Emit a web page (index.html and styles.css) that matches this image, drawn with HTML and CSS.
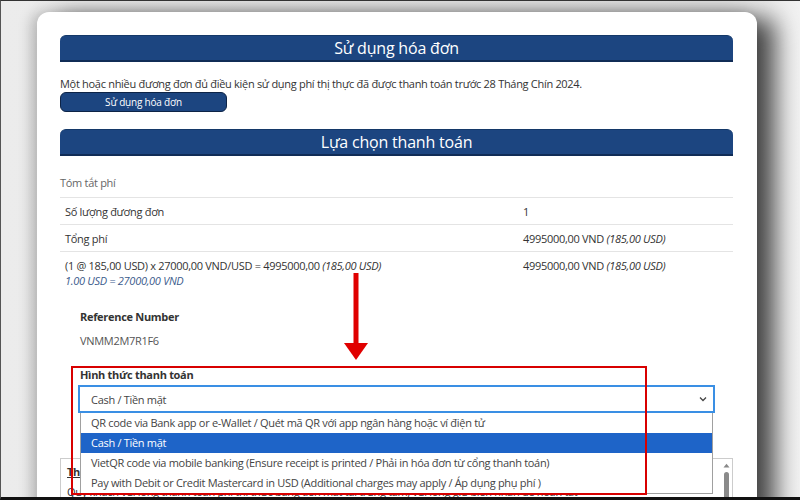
FILE: index.html
```html
<!DOCTYPE html>
<html lang="vi">
<head>
  <meta charset="UTF-8" />
  <title>Lựa chọn thanh toán</title>
  <link rel="stylesheet" href="styles.css">
</head>
<body>
  <div class="frame">
    <div class="card">
      <div class="section-title">Sử dụng hóa đơn</div>
      <p class="note">Một hoặc nhiều đương đơn đủ điều kiện sử dụng phí thị thực đã được thanh toán trước 28 Tháng Chín 2024.</p>
      <button class="use-btn">Sử dụng hóa đơn</button>

      <div class="section-title second">Lựa chọn thanh toán</div>

      <div class="summary-label">Tóm tắt phí</div>
      <table class="fee-table">
        <tr>
          <td>Số lượng đương đơn</td>
          <td class="value">1</td>
        </tr>
        <tr>
          <td>Tổng phí</td>
          <td class="value">4995000,00 VND <em>(185,00 USD)</em></td>
        </tr>
        <tr class="calc">
          <td>(1 @ 185,00 USD) x 27000,00 VND/USD = 4995000,00 <em>(185,00 USD)</em><br>
            <em class="rate">1.00 USD = 27000,00 VND</em></td>
          <td class="value">4995000,00 VND <em>(185,00 USD)</em></td>
        </tr>
      </table>

      <div class="field">
        <div class="field-label">Reference Number</div>
        <div class="field-value">VNMM2M7R1F6</div>
      </div>

      <div class="field pay">
        <div class="field-label">Hình thức thanh toán</div>
        <div class="select-wrap">
          <div class="select">
            <span>Cash / Tiền mặt</span>
            <svg class="chevron" width="8" height="6" viewBox="0 0 8 6"><path d="M1 1.5 L4 4.5 L7 1.5" fill="none" stroke="#444" stroke-width="1.3"/></svg>
          </div>
          <ul class="options">
            <li>QR code via Bank app or e-Wallet / Quét mã QR với app ngân hàng hoặc ví điện tử</li>
            <li class="selected">Cash / Tiền mặt</li>
            <li>VietQR code via mobile banking (Ensure receipt is printed / Phải in hóa đơn từ cổng thanh toán)</li>
            <li>Pay with Debit or Credit Mastercard in USD (Additional charges may apply / Áp dụng phụ phí )</li>
          </ul>
        </div>
      </div>

      <div class="terms">
        <div class="terms-text">
          <strong><u>Thông tin</u></strong><br>
          Quý khách vui lòng thanh toán phí thị thực bằng tiền mặt tại trung tâm, vui lòng giữ biên nhận để hoàn tất
        </div>
        <div class="scrollbar">
          <svg width="7" height="5" viewBox="0 0 7 5"><path d="M0.5 4.5 L3.5 0.8 L6.5 4.5 Z" fill="#888"/></svg>
          <div class="thumb"></div>
        </div>
      </div>
    </div>
  </div>

  <!-- annotation overlays -->
  <svg class="arrow" width="30" height="92" viewBox="0 0 30 92">
    <rect x="12.5" y="0" width="5" height="74" fill="#e00000"/>
    <path d="M3 70 L27 70 L15 87 Z" fill="#e00000"/>
  </svg>
  <div class="highlight-box"></div>
</body>
</html>
```

FILE: styles.css
```css
* {
  box-sizing: border-box;
}

html, body {
  height: 500px;
  overflow: hidden;
}

body {
  margin: 0;
  position: relative;
  font-family: 'Open Sans', 'Noto Sans', sans-serif;
  font-size: 11px;
  letter-spacing: -0.3px;
  color: #333;
  background: linear-gradient(90deg, #ececec 0%, #e4e4e4 90%, #f2f2f2 100%);
  border-top: 1px solid #333;
  border-bottom: 3px solid #111;
  border-left: 1px solid #555;
}

.frame {
  padding: 11px 43px 0 36px;
}

.card {
  background: #fff;
  border-radius: 12px 12px 0 0;
  padding: 23px 24px 0 23px;
  height: 520px;
  box-shadow: 18px 6px 24px rgba(0, 0, 0, 0.7), -6px 0 14px rgba(0, 0, 0, 0.2);
}

.section-title {
  height: 27px;
  line-height: 25px;
  background: #1c4580;
  color: #fff;
  text-align: center;
  font-size: 16px;
  letter-spacing: -0.2px;
  border-radius: 6px 6px 0 0;
  border-bottom: 2px solid #102c56;
  border-top: 1px solid #143868;
}

.section-title.second {
  margin-top: 17px;
}

.note {
  margin: 14px 0 0;
  line-height: 16px;
}

.use-btn {
  display: block;
  width: 167px;
  height: 20px;
  padding: 0;
  background: #1c4580;
  border: 1px solid #0d2447;
  border-radius: 6px;
  color: #fff;
  font-family: inherit;
  font-size: 10px;
  letter-spacing: -0.2px;
}

.summary-label {
  margin-top: 19px;
  line-height: 16px;
  color: #666;
  padding-bottom: 6px;
}

.fee-table {
  width: 100%;
  border-collapse: collapse;
}

.fee-table td {
  border-top: 1px solid #e4e4e4;
  padding: 0 5px;
  height: 27px;
  vertical-align: middle;
}

.fee-table td.value {
  width: 215px;
}

.fee-table tr.calc td {
  vertical-align: top;
  padding-top: 6px;
  line-height: 15px;
}

.rate {
  color: #3b5b8c;
}

.field {
  padding: 0 20px;
}

.field-label {
  font-weight: bold;
  margin-top: 21px;
  line-height: 16px;
}

.field-value {
  margin-top: 8px;
  line-height: 16px;
  color: #555;
}

.field.pay {
  padding: 0 18px;
  margin-top: 18px;
}

.field.pay .field-label {
  padding-left: 2px;
  margin-top: 0;
}

.select-wrap {
  position: relative;
  margin-top: 2px;
}

.select {
  height: 28px;
  border: 2px solid #3a8fe4;
  display: flex;
  align-items: center;
  justify-content: space-between;
  padding: 0 6px 0 11px;
  color: #444;
}

.options {
  position: absolute;
  top: 28px;
  left: 2px;
  right: 2px;
  margin: 0;
  padding: 0;
  list-style: none;
  background: #fff;
  border: 1px solid #a0a0a0;
  border-top: none;
  z-index: 2;
}

.options li {
  height: 20px;
  line-height: 20px;
  padding-left: 10px;
  color: #444;
  white-space: nowrap;
  overflow: hidden;
}

.options li.selected {
  background: #1e64c8;
  color: #fff;
}

.terms {
  margin-top: 45px;
  display: flex;
  border: 1px solid #ccc;
  height: 80px;
}

.terms-text {
  flex: 1;
  padding: 3px 6px;
  line-height: 20px;
}

.scrollbar {
  width: 12px;
  display: flex;
  flex-direction: column;
  align-items: center;
  padding-top: 4px;
  gap: 4px;
}

.thumb {
  width: 5px;
  height: 40px;
  background: #8a8a8a;
  border-radius: 3px;
}

.arrow {
  position: absolute;
  left: 340px;
  top: 272px;
}

.highlight-box {
  position: absolute;
  left: 70px;
  top: 365px;
  width: 576px;
  height: 129px;
  border: 2px solid #d80000;
  z-index: 3;
}
```
